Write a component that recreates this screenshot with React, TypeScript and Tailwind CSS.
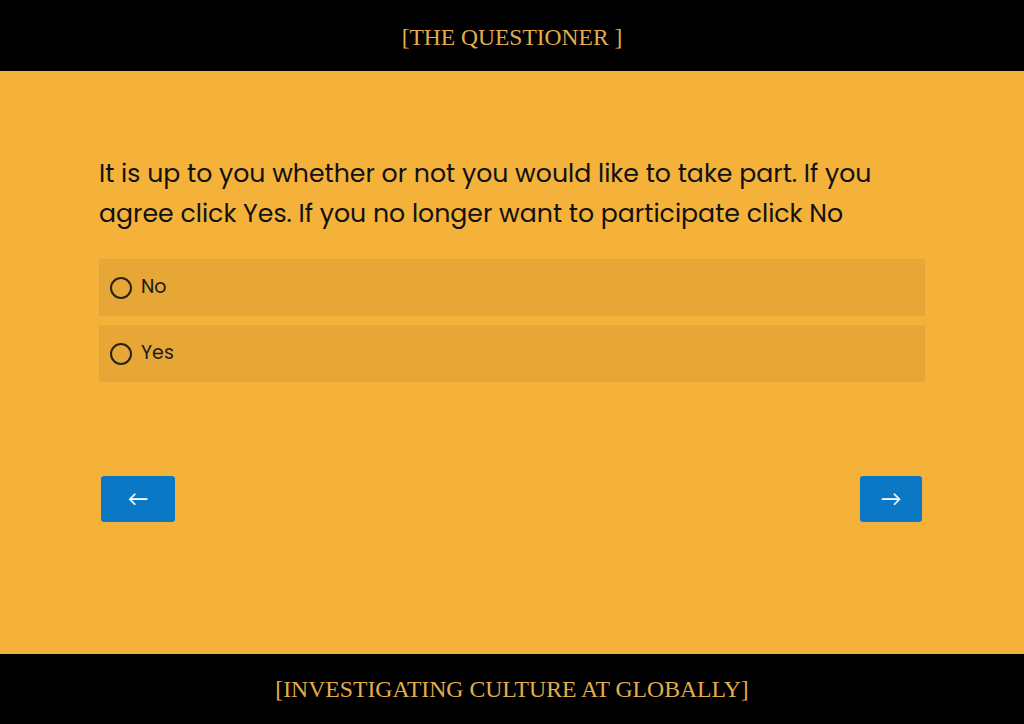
import { useState } from 'react'

const options = ['No', 'Yes']

export default function App() {
  const [choice, setChoice] = useState<string | null>(null)

  return (
    <div className="flex min-h-[724px] flex-col bg-[#f4b23a] font-['Poppins','Lato','Noto_Sans',sans-serif] text-[#1a1a1a]">
      <header className="flex h-[71px] items-center justify-center bg-black pt-[5px]">
        <h1 className="font-['Liberation_Serif',serif] text-[23.5px] text-[#e2ad4b]">
          [THE QUESTIONER ]
        </h1>
      </header>

      <main className="flex-1 px-[99px] pt-[83px]">
        <p className="text-[25.2px] leading-[40px] text-[#111]">
          It is up to you whether or not you would like to take part. If you agree click Yes. If you no longer want to participate click No
        </p>

        <div className="mt-[25px] flex flex-col gap-[9px]">
          {options.map((option) => (
            <label
              key={option}
              className="flex h-[57px] cursor-pointer items-center gap-[9px] bg-[#e6a737] px-[11px]"
              onClick={() => setChoice(option)}
            >
              <span className="flex h-[22px] w-[22px] items-center justify-center rounded-full border-2 border-[#2a2116]">
                {choice === option && <span className="h-[10px] w-[10px] rounded-full bg-[#2a2116]" />}
              </span>
              <span className="text-[19px]">{option}</span>
            </label>
          ))}
        </div>

        <div className="mt-[94px] flex justify-between pl-[2px] pr-[3px]">
          <button className="flex h-[46px] w-[74px] items-center justify-center rounded-[3px] bg-[#0a78c4] text-[21px] text-white">
            ←
          </button>
          <button className="flex h-[46px] w-[62px] items-center justify-center rounded-[3px] bg-[#0a78c4] text-[21px] text-white">
            →
          </button>
        </div>
      </main>

      <footer className="flex h-[70px] items-center justify-center bg-black pt-[2px]">
        <p className="font-['Liberation_Serif',serif] text-[23.7px] text-[#e2ad4b]">
          [INVESTIGATING CULTURE AT GLOBALLY]
        </p>
      </footer>
    </div>
  )
}
